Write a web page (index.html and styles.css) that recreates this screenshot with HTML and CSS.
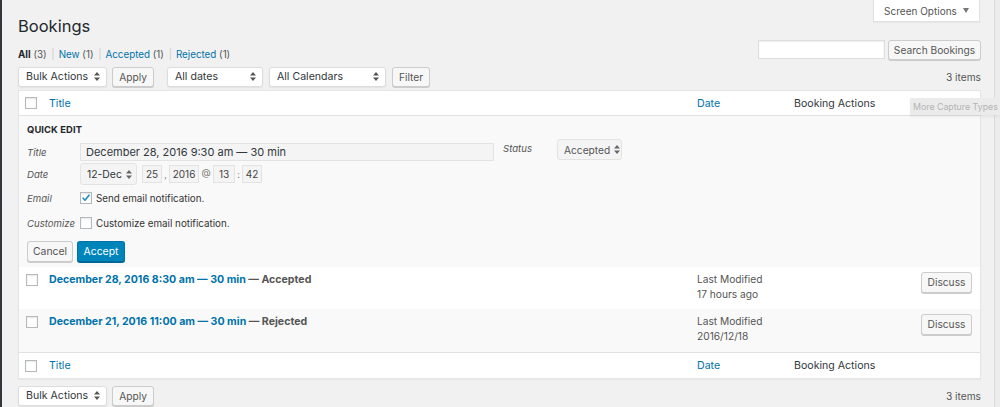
FILE: index.html
```html
<!DOCTYPE html>
<html lang="en">
<head>
<meta charset="utf-8">
<title>Bookings</title>
<link rel="stylesheet" href="styles.css">
</head>
<body>
<div class="edge-left"></div>
<div class="wrap">
  <div class="head">
    <h1>Bookings</h1>
    <div class="screen-opts">Screen Options <span class="tri"></span></div>
  </div>
  <div class="row2">
    <ul class="subsubsub">
      <li><b class="cur">All</b> <span class="count">(3)</span> <span class="sep">|</span></li>
      <li><a>New</a> <span class="count">(1)</span> <span class="sep">|</span></li>
      <li><a>Accepted</a> <span class="count">(1)</span> <span class="sep">|</span></li>
      <li><a>Rejected</a> <span class="count">(1)</span></li>
    </ul>
    <div class="search">
      <div class="input search-input"></div>
      <div class="btn btn-search">Search Bookings</div>
    </div>
  </div>

  <div class="tablenav top">
    <div class="sel sel-bulk">Bulk Actions <svg class="arr" width="6" height="9" viewBox="0 0 6 9"><path d="M0 3.6L3 0 6 3.6z M0 5.4L3 9 6 5.4z" fill="#555"/></svg></div>
    <div class="btn btn-apply">Apply</div>
    <div class="sel sel-dates">All dates <svg class="arr" width="6" height="9" viewBox="0 0 6 9"><path d="M0 3.6L3 0 6 3.6z M0 5.4L3 9 6 5.4z" fill="#555"/></svg></div>
    <div class="sel sel-cal">All Calendars <svg class="arr" width="6" height="9" viewBox="0 0 6 9"><path d="M0 3.6L3 0 6 3.6z M0 5.4L3 9 6 5.4z" fill="#555"/></svg></div>
    <div class="btn btn-filter">Filter</div>
    <div class="items">3 items</div>
  </div>

  <div class="table">
    <div class="tr thead">
      <div class="cb"><span class="check"></span></div>
      <div><a>Title</a></div>
      <div><a>Date</a></div>
      <div class="th-actions">Booking Actions</div>
    </div>

    <div class="qe">
      <div class="qe-left">
        <div class="qe-title">Quick Edit</div>
        <div class="qe-row qe-row-title">
          <span class="lbl">Title</span>
          <div class="input title-input">December 28, 2016 9:30 am — 30 min</div>
        </div>
        <div class="qe-row qe-row-date">
          <span class="lbl">Date</span>
          <div class="sel sel-month">12-Dec <svg class="arr" width="6" height="9" viewBox="0 0 6 9"><path d="M0 3.6L3 0 6 3.6z M0 5.4L3 9 6 5.4z" fill="#666"/></svg></div>
          <div class="input d-in d-day">25</div><span class="dsep">,</span>
          <div class="input d-in d-year">2016</div><span class="dsep at">@</span>
          <div class="input d-in d-hr">13</div><span class="dsep">:</span>
          <div class="input d-in d-min">42</div>
        </div>
        <div class="qe-row qe-row-email">
          <span class="lbl">Email</span>
          <span class="check checked"><svg width="12" height="12" viewBox="0 0 12 12"><path d="M2.6 6.2l2.2 2.4 4.8-6" fill="none" stroke="#1e8cbe" stroke-width="1.9" stroke-linecap="round" stroke-linejoin="round"/></svg></span>
          <span class="cb-text">Send email notification.</span>
        </div>
        <div class="qe-row qe-row-cust">
          <span class="lbl">Customize</span>
          <span class="check"></span>
          <span class="cb-text">Customize email notification.</span>
        </div>
        <div class="qe-buttons">
          <div class="btn btn-cancel">Cancel</div>
          <div class="btn-primary">Accept</div>
        </div>
      </div>
      <div class="qe-right">
        <span class="lbl status-lbl">Status</span>
        <div class="sel sel-status">Accepted <svg class="arr" width="6" height="9" viewBox="0 0 6 9"><path d="M0 3.6L3 0 6 3.6z M0 5.4L3 9 6 5.4z" fill="#666"/></svg></div>
      </div>
    </div>

    <div class="tr row">
      <div class="cb"><span class="check"></span></div>
      <div class="title-cell"><a class="row-title">December 28, 2016 8:30 am — 30 min</a> — Accepted</div>
      <div class="date-cell">Last Modified<br>17 hours ago</div>
      <div class="act-cell"><div class="btn btn-discuss">Discuss</div></div>
    </div>
    <div class="tr row alt">
      <div class="cb"><span class="check"></span></div>
      <div class="title-cell"><a class="row-title">December 21, 2016 11:00 am — 30 min</a> — Rejected</div>
      <div class="date-cell">Last Modified<br>2016/12/18</div>
      <div class="act-cell"><div class="btn btn-discuss">Discuss</div></div>
    </div>

    <div class="tr tfoot">
      <div class="cb"><span class="check"></span></div>
      <div><a>Title</a></div>
      <div><a>Date</a></div>
      <div class="th-actions">Booking Actions</div>
    </div>
  </div>

  <div class="tablenav bottom">
    <div class="sel sel-bulk">Bulk Actions <svg class="arr" width="6" height="9" viewBox="0 0 6 9"><path d="M0 3.6L3 0 6 3.6z M0 5.4L3 9 6 5.4z" fill="#555"/></svg></div>
    <div class="btn btn-apply">Apply</div>
    <div class="items">3 items</div>
  </div>
</div>
<div class="edge-right"></div>
<div class="tooltip">More Capture Types</div>
</body>
</html>
```
FILE: styles.css
```css
* { box-sizing: border-box; }
html, body { margin: 0; height: 100%; }
body {
  background: #f1f1f1;
  font-family: Inter, "Liberation Sans", Arial, sans-serif;
  font-size: 10.6px;
  color: #444;
  display: flex;
  overflow: hidden;
  position: relative;
}
a { color: #0073aa; text-decoration: none; }

.edge-left { width: 2px; flex: none; background: #32373c; }
.edge-right { width: 6px; flex: none; background: #ececec; border-left: 1px solid #dadada; }
.wrap { flex: 1; min-width: 0; padding: 0 13px 0 16px; }

.head { display: flex; justify-content: space-between; align-items: flex-start; height: 40px; }
h1 { margin: 0; padding-top: 15px; font-size: 16.5px; font-weight: 400; line-height: 22px; color: #23282d; }
.screen-opts {
  width: 107px; height: 22px; margin-right: 1px;
  background: #fff; border: 1px solid #e1e1e1; border-top: 0;
  box-shadow: 0 1px 1px rgba(0,0,0,.04);
  display: flex; align-items: center; justify-content: center; gap: 6px;
  color: #555; font-size: 10px; white-space: nowrap;
}
.tri { width: 0; height: 0; border-left: 3px solid transparent; border-right: 3px solid transparent; border-top: 5px solid #72777c; }

.row2 { display: flex; justify-content: space-between; align-items: flex-end; height: 20px; }
.subsubsub { list-style: none; margin: 0 0 -2px; padding: 0; display: flex; gap: 4px; font-size: 9.8px; line-height: 14px; color: #666; }
.subsubsub .cur { color: #23282d; font-weight: 700; }
.subsubsub .count { color: #555; }
.subsubsub .sep { color: #ccc; margin-left: 2px; }
.search { display: flex; gap: 3px; }
.input { background: #fff; border: 1px solid #ddd; box-shadow: inset 0 1px 2px rgba(0,0,0,.07); }
.search-input { width: 127px; height: 19px; }

.btn {
  height: 20px; padding: 0 4px;
  border: 1px solid #ccc; border-radius: 3px;
  background: #f7f7f7; box-shadow: 0 1px 0 #ccc;
  color: #555; font-size: 10.2px; white-space: nowrap;
  display: inline-flex; align-items: center; justify-content: center;
}
.btn-search { width: 93px; height: 20px; }

.tablenav { display: flex; align-items: center; height: 21px; }
.tablenav.top { margin-top: 6px; }
.tablenav.bottom { margin-top: 6px; }
.sel {
  height: 20px; padding: 0 6px 0 7px;
  background: #fff; border: 1px solid #ddd; border-radius: 3px;
  box-shadow: 0 1px 2px rgba(0,0,0,.07);
  display: flex; align-items: center; justify-content: space-between;
  color: #32373c; font-size: 10.6px; white-space: nowrap;
}
.sel .arr { flex: none; margin-left: 4px; }
.sel-bulk { width: 89px; }
.btn-apply { width: 42px; margin-left: 5px; }
.sel-dates { width: 96px; margin-left: 13px; }
.sel-cal { width: 117px; margin-left: 6px; }
.btn-filter { width: 38px; margin-left: 6px; }
.items { margin-left: auto; color: #555; font-size: 10.2px; }

.table { margin-top: 3px; background: #fff; border: 1px solid #e5e5e5; box-shadow: 0 1px 1px rgba(0,0,0,.04); }
.tr { display: grid; grid-template-columns: 30px 1fr 97px 186px; }
.thead, .tfoot { height: 26px; align-items: center; color: #32373c; }
.thead { height: 25px; border-bottom: 1px solid #e1e1e1; }
.tfoot { border-top: 1px solid #e1e1e1; }
.cb { padding-left: 6px; display: flex; }
.check {
  width: 12px; height: 12px; flex: none;
  background: #fff; border: 1px solid #b4b9be;
  box-shadow: inset 0 1px 2px rgba(0,0,0,.1);
  display: inline-flex; align-items: center; justify-content: center;
}
.check svg { display: block; }

.qe { background: #f9f9f9; height: 151px; padding: 8px 8px 0; display: flex; }
.qe-left { width: 467px; flex: none; }
.qe-title { font-size: 9.4px; font-weight: 700; line-height: 12px; text-transform: uppercase; color: #23282d; letter-spacing: .1px; }
.qe-row { display: flex; align-items: center; }
.lbl { width: 53px; flex: none; font-style: italic; color: #555; font-size: 9.6px; }
.qe-row-title { margin-top: 7px; height: 18px; }
.title-input { flex: 1; height: 18px; background: #f4f4f4; border-color: #e3e3e3; box-shadow: none; padding-left: 5px; display: flex; align-items: center; color: #32373c; font-size: 11px; }
.qe-row-date { margin-top: 2px; height: 22px; }
.sel-month { width: 57px; height: 22px; background: #f4f4f4; border-color: #e3e3e3; box-shadow: none; font-size: 10.4px; padding: 0 5px 0 6px; }
.d-in { height: 18px; background: #f4f4f4; border-color: #e3e3e3; box-shadow: none; display: flex; align-items: center; justify-content: center; color: #444; font-size: 10px; }
.d-day { width: 20px; margin-left: 5px; }
.d-year { width: 30px; }
.d-hr { width: 22px; }
.d-min { width: 20px; }
.dsep { width: 7px; text-align: center; color: #777; font-size: 9px; }
.dsep.at { width: 14px; font-size: 9.5px; margin-top: -3px; }
.qe-row-email { margin-top: 7px; height: 12px; }
.qe-row-cust { margin-top: 13px; height: 12px; }
.cb-text { margin-left: 4px; color: #333; font-size: 9.8px; }
.qe-buttons { margin-top: 12px; display: flex; gap: 4px; margin-left: 0; }
.btn-cancel { width: 46px; height: 21px; font-size: 10.4px; }
.btn-primary {
  width: 48px; height: 21px; border-radius: 3px;
  background: #0085ba; border: 1px solid #0073aa; border-bottom-color: #006799;
  box-shadow: 0 1px 0 #006799;
  color: #fff; font-size: 10.4px;
  display: flex; align-items: center; justify-content: center;
}
.qe-right { margin-left: 9px; margin-top: 15px; display: flex; align-items: center; height: 21px; }
.status-lbl { width: 54px; margin-top: -3px; }
.sel-status { width: 65px; height: 21px; background: #f4f4f4; border-color: #e3e3e3; box-shadow: none; font-size: 10.2px; padding: 0 4px 0 6px; color: #555; }

.row { height: 42px; padding-top: 5px; line-height: 15px; }
.row.alt { height: 43px; background: #f9f9f9; }
.row .cb { padding-left: 7px; padding-top: 2px; }
.title-cell { font-weight: 700; color: #555; font-size: 10.6px; }
.row-title { font-weight: 700; }
.date-cell { color: #555; font-size: 10.2px; }
.act-cell { display: flex; justify-content: flex-end; padding-right: 8px; }
.btn-discuss { width: 51px; height: 21px; font-size: 10.2px; }
.th-actions { color: #32373c; }

.tooltip {
  position: absolute; left: 910px; top: 98px;
  width: 90px; height: 17px; overflow: hidden; white-space: nowrap;
  background: #ebebeb; color: #b3b3b3; font-size: 8.8px;
  padding-left: 3px; line-height: 17px;
  box-shadow: 0 2px 3px rgba(0,0,0,.06);
}
```
